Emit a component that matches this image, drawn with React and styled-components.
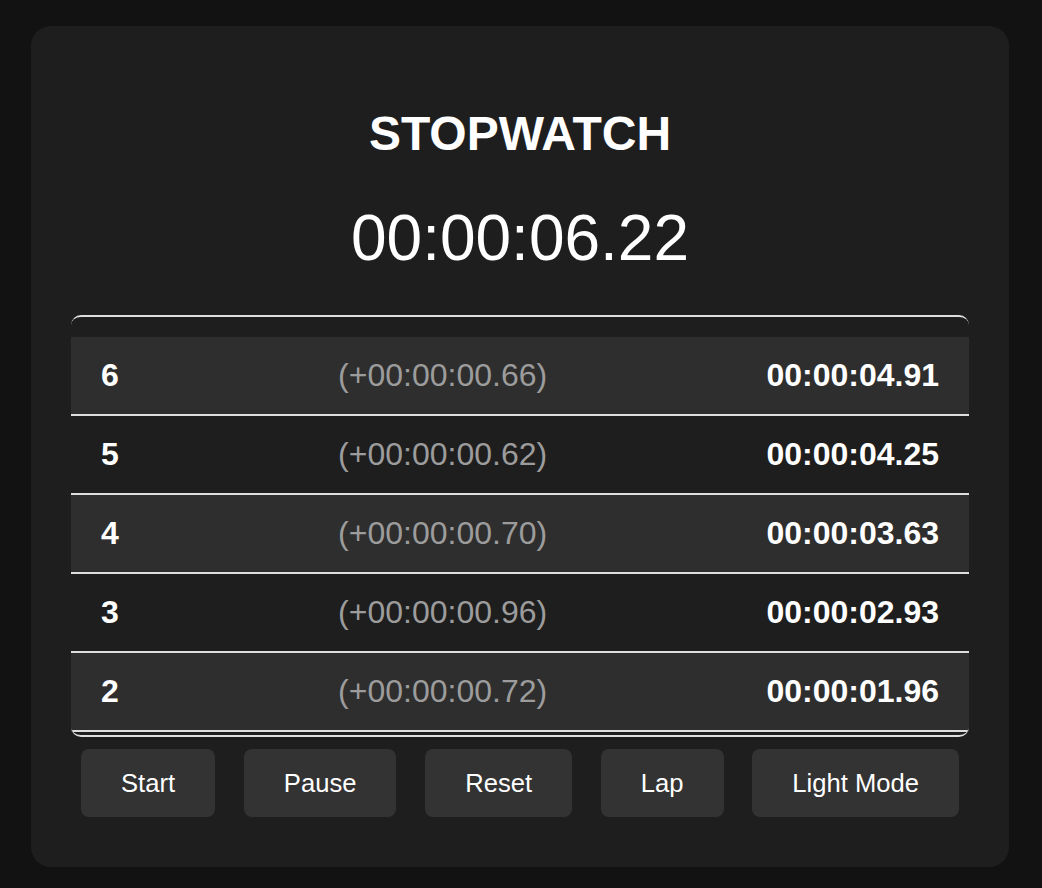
import React from 'react';
import styled, { createGlobalStyle } from 'styled-components';

const laps = [
  { n: 6, diff: '+00:00:00.66', total: '00:00:04.91' },
  { n: 5, diff: '+00:00:00.62', total: '00:00:04.25' },
  { n: 4, diff: '+00:00:00.70', total: '00:00:03.63' },
  { n: 3, diff: '+00:00:00.96', total: '00:00:02.93' },
  { n: 2, diff: '+00:00:00.72', total: '00:00:01.96' },
  { n: 1, diff: '+00:00:01.24', total: '00:00:01.24' },
];

const buttons = ['Start', 'Pause', 'Reset', 'Lap', 'Light Mode'];

const App = () => {
  return (
    <>
      <GlobalStyle />
      <Card>
        <Title>STOPWATCH</Title>
        <Timer>00:00:06.22</Timer>
        <LapList>
          {laps.map((lap, i) => (
            <LapRow key={lap.n} shaded={i % 2 === 0}>
              <LapNumber>{lap.n}</LapNumber>
              <LapDiff>({lap.diff})</LapDiff>
              <LapTotal>{lap.total}</LapTotal>
            </LapRow>
          ))}
        </LapList>
        <Controls>
          {buttons.map(b => (
            <ControlButton key={b}>{b}</ControlButton>
          ))}
        </Controls>
      </Card>
    </>
  );
};

const GlobalStyle = createGlobalStyle`
  html, body {
    margin: 0;
    background: #121212;
    font-family: "Liberation Sans", Arial, sans-serif;
    color: #fff;
  }
`;

const Card = styled.div`
  width: 978px;
  box-sizing: border-box;
  margin: 26px 0 0 31px;
  padding: 40px 40px 50px;
  background: #1e1e1e;
  border-radius: 20px;
  display: flex;
  flex-direction: column;
  align-items: stretch;
`;

const Title = styled.h1`
  margin: 42px 0 42px;
  font-size: 48px;
  line-height: 52px;
  font-weight: bold;
  text-align: center;
`;

const Timer = styled.div`
  margin: 0 0 41px;
  font-size: 64px;
  line-height: 72px;
  text-align: center;
`;

const LapList = styled.div`
  height: 422px;
  box-sizing: border-box;
  padding-top: 20px;
  border-top: 2px solid #dedede;
  border-bottom: 2px solid #dedede;
  border-radius: 10px;
  overflow-y: auto;
  scrollbar-width: none;
  &::-webkit-scrollbar {
    display: none;
  }
`;

const LapRow = styled.div`
  display: flex;
  justify-content: space-between;
  align-items: center;
  padding: 20px 30px;
  line-height: 37px;
  font-size: 32px;
  background: ${p => (p.shaded ? '#2e2e2e' : 'transparent')};
  border-bottom: 2px solid #dedede;
`;

const LapNumber = styled.span`
  font-weight: bold;
`;

const LapDiff = styled.span`
  color: #9c9c9c;
`;

const LapTotal = styled.span`
  font-weight: bold;
`;

const Controls = styled.div`
  display: flex;
  justify-content: space-between;
  margin-top: 12px;
  padding: 0 10px;
`;

const ControlButton = styled.button`
  border: none;
  border-radius: 8px;
  background: #333;
  color: #fff;
  font-family: "Liberation Sans", Arial, sans-serif;
  font-size: 25.6px;
  line-height: 28px;
  padding: 20px 40px;
  cursor: pointer;
`;

export default App;
